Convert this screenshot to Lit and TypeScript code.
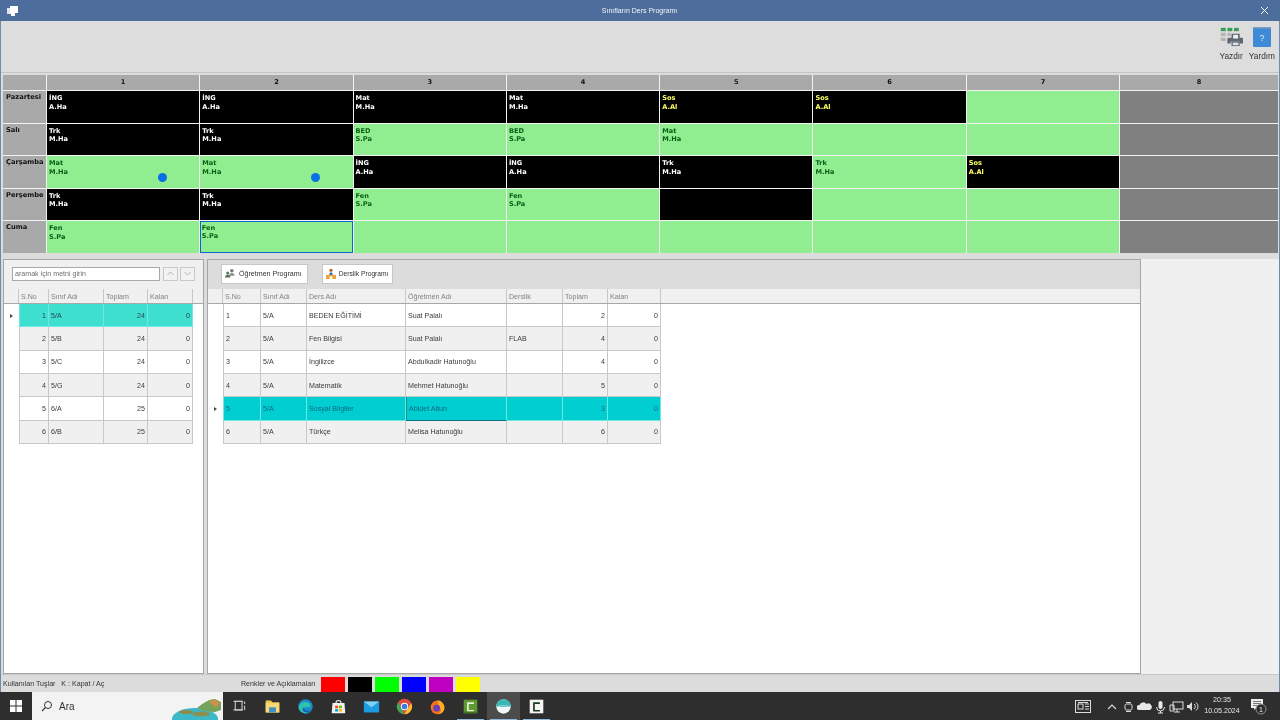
import { LitElement, html, css, svg } from "lit";
import { customElement, property } from "lit/decorators.js";
import { classMap } from "lit/directives/class-map.js";

type Col = { title: string; width: number; right?: boolean };

const LEFT_COLS: Col[] = [
  { title: "S.No", width: 30, right: true },
  { title: "Sınıf Adı", width: 55 },
  { title: "Toplam", width: 44, right: true },
  { title: "Kalan", width: 45, right: true },
];
const LEFT_ROWS = [
  ["1", "5/A", "24", "0"],
  ["2", "5/B", "24", "0"],
  ["3", "5/C", "24", "0"],
  ["4", "5/G", "24", "0"],
  ["5", "6/A", "25", "0"],
  ["6", "6/B", "25", "0"],
];
const RIGHT_COLS: Col[] = [
  { title: "S.No", width: 38 },
  { title: "Sınıf Adı", width: 46 },
  { title: "Ders Adı", width: 99 },
  { title: "Öğretmen Adı", width: 101 },
  { title: "Derslik", width: 56 },
  { title: "Toplam", width: 45, right: true },
  { title: "Kalan", width: 53, right: true },
];
const RIGHT_ROWS = [
  ["1", "5/A", "BEDEN EĞİTİMİ", "Suat Palalı", "", "2", "0"],
  ["2", "5/A", "Fen Bilgisi", "Suat Palalı", "FLAB", "4", "0"],
  ["3", "5/A", "İngilizce", "Abdulkadir Hatunoğlu", "", "4", "0"],
  ["4", "5/A", "Matematik", "Mehmet Hatunoğlu", "", "5", "0"],
  ["5", "5/A", "Sosyal Bilgiler", "Abidet Altun", "", "3", "0"],
  ["6", "5/A", "Türkçe", "Melisa Hatunoğlu", "", "6", "0"],
];

// kind: b = black, y = black with yellow text, g = green
type Slot = { kind: string; a?: string; b?: string; dot?: boolean; sel?: boolean };
const ing = { kind: "b", a: "İNG", b: "A.Ha" };
const trk = { kind: "b", a: "Trk", b: "M.Ha" };
const mat = { kind: "b", a: "Mat", b: "M.Ha" };
const sos = { kind: "y", a: "Sos", b: "A.Al" };
const gMat = { kind: "g", a: "Mat", b: "M.Ha" };
const bed = { kind: "g", a: "BED", b: "S.Pa" };
const fen = { kind: "g", a: "Fen", b: "S.Pa" };
const free = { kind: "g" };

const DAYS: { name: string; slots: Slot[] }[] = [
  { name: "Pazartesi", slots: [ing, ing, mat, mat, sos, sos, free] },
  { name: "Salı", slots: [trk, trk, bed, bed, gMat, free, free] },
  {
    name: "Çarşamba",
    slots: [{ ...gMat, dot: true }, { ...gMat, dot: true }, ing, ing, trk, { kind: "g", a: "Trk", b: "M.Ha" }, sos],
  },
  { name: "Perşembe", slots: [trk, trk, fen, fen, { kind: "b" }, free, free] },
  { name: "Cuma", slots: [fen, { ...fen, sel: true }, free, free, free, free, free] },
];

const SWATCHES = ["#ff0000", "#000000", "#00ff00", "#0000ff", "#c000c0", "#ffff00"];

@customElement("data-grid")
class DataGrid extends LitElement {
  @property({ type: Array }) cols: Col[] = [];
  @property({ type: Array }) rows: string[][] = [];
  @property({ type: Number }) indicator = 15;
  @property({ type: Number }) current = 0;
  @property({ type: Number }) focusCol = -1;
  @property() tone = "turq";

  static styles = css`
    :host {
      display: block;
      font: 7.1px "Liberation Sans", sans-serif;
      color: #3a3a3a;
    }
    .head {
      display: flex;
      height: 14px;
      background: #f0f0f0;
      border-bottom: 1px solid #a8a8a8;
      color: #808080;
    }
    .row {
      display: flex;
      height: 23.33px;
    }
    .gutter {
      flex: none;
      display: flex;
      align-items: center;
      justify-content: center;
      border-right: 1px solid #c8c8c8;
    }
    .row .gutter {
      border-right-color: transparent;
    }
    .arrow {
      width: 0;
      height: 0;
      border-left: 3px solid #444;
      border-top: 2.5px solid transparent;
      border-bottom: 2.5px solid transparent;
    }
    .cell {
      flex: none;
      box-sizing: border-box;
      display: flex;
      align-items: center;
      padding: 1px 2px 0;
      overflow: hidden;
      white-space: nowrap;
      border-right: 1px solid #c8c8c8;
      border-bottom: 1px solid #c8c8c8;
    }
    .head .cell {
      border-bottom: none;
    }
    .first {
      border-left: 1px solid #c8c8c8;
    }
    .num {
      justify-content: flex-end;
    }
    .odd .cell {
      background: #f0f0f0;
    }
    .cur .cell {
      border-color: #6fe8e0;
    }
    .cur.turq .cell {
      background: #40e0d0;
      color: #245;
    }
    .cur.dark .cell {
      background: #00ced1;
      color: #0a6a80;
    }
    .cur .cell.focus {
      border-left: 1px solid #1b8a90;
      border-bottom: 1px solid #0f7080;
    }
  `;

  render() {
    return html`
      <div class="head">
        <div class="gutter" style="width:${this.indicator - 1}px"></div>
        ${this.cols.map(
          (c) => html`<div class="cell" style="width:${c.width}px">${c.title}</div>`
        )}
      </div>
      ${this.rows.map(
        (r, i) => html`
          <div class=${classMap({ row: true, odd: i % 2 === 1, cur: i === this.current, [this.tone]: true })}>
            <div class="gutter" style="width:${this.indicator - 1}px">
              ${i === this.current ? html`<span class="arrow"></span>` : ""}
            </div>
            ${r.map(
              (v, j) => html`<div
                class=${classMap({
                  cell: true,
                  first: j === 0,
                  num: !!this.cols[j].right,
                  focus: i === this.current && j === this.focusCol,
                })}
                style="width:${this.cols[j].width}px"
              >
                ${v}
              </div>`
            )}
          </div>
        `
      )}
    `;
  }
}

const printIcon = html`<svg width="23" height="19" viewBox="0 0 28 23">
  <rect x="1" y="1" width="6" height="4" fill="#3f9a5a" />
  <rect x="9" y="1" width="6" height="4" fill="#3f9a5a" />
  <rect x="17" y="1" width="6" height="4" fill="#3f9a5a" />
  <rect x="1" y="7" width="6" height="4" fill="#b4b4b4" />
  <rect x="9" y="7" width="4" height="4" fill="#b4b4b4" />
  <rect x="1" y="13" width="6" height="4" fill="#b4b4b4" />
  <path d="M11 13h3V8h10v5h3a1 1 0 0 1 1 1v6h-4v-2H13v2H9v-6a2 2 0 0 1 2-1z" fill="#5d6872" />
  <rect x="16" y="9.5" width="6" height="4.5" fill="#eee" />
  <rect x="14" y="18" width="10" height="5" fill="#5d6872" />
  <rect x="15.5" y="19" width="7" height="3" fill="#e4e4e4" />
</svg>`;

const helpIcon = html`<svg width="18" height="20" viewBox="0 0 18 20">
  <rect width="18" height="20" rx="1" fill="#3e8ad4" />
  <rect width="18" height="1.5" fill="#7c9ec0" />
  <text x="9" y="14" font-size="9" fill="#dcecff" text-anchor="middle" font-family="Liberation Sans">?</text>
</svg>`;

const teacherIcon = html`<svg width="10" height="11" viewBox="0 0 11 11">
  <circle cx="7.5" cy="2.5" r="2" fill="#7b7b7b" />
  <path d="M4.5 8c0-2 1.5-3 3-3s3 1 3 3z" fill="#8c8c8c" />
  <circle cx="3" cy="5" r="1.7" fill="#4d7a4d" />
  <path d="M0 10c0-2 1.3-3 3-3s3 1 3 3z" fill="#55705a" />
</svg>`;

const roomIcon = html`<svg width="10" height="12" viewBox="0 0 11 12">
  <circle cx="5.5" cy="2" r="1.8" fill="#b06a30" />
  <path d="M3.5 7c0-2 1-3 2-3s2 1 2 3z" fill="#3f6fb5" />
  <rect x="0" y="7" width="11" height="4.5" fill="#f0a23c" />
  <rect x="4" y="8.5" width="3" height="3" fill="#fff" />
</svg>`;

const chevron = (up: boolean) =>
  html`<svg width="7" height="5" viewBox="0 0 7 5">
    <path d=${up ? "M.5 4l3-3 3 3" : "M.5 1l3 3 3-3"} fill="none" stroke="#b0b0b0" />
  </svg>`;

const taskIcons = [
  svg`<g fill="none" stroke="#c8c8c8" stroke-width="1.3"><rect x="5" y="4" width="8" height="10"/><path d="M3 4h11M3 14h11M16 4v3M16 9v5"/></g>`,
  svg`<path d="M2 3h6l2 2h8v12H2z" fill="#f4c64e"/><rect x="2" y="6" width="16" height="11" fill="#f8d775"/><rect x="6" y="11" width="8" height="6" fill="#3d8fc4"/>`,
  svg`<circle cx="10" cy="10" r="8.5" fill="#1b8bd0"/><path d="M2 11c1-6 8-8 12-5 3 2 2 5 0 5H8c0 3 4 5 9 3-2 4-7 5-10 3-3-1-5-3-5-6z" fill="#2fc4a8"/><path d="M8 11c0 3 4 5 9 3-2 4-7 4-9 2-2-1-2-4 0-5z" fill="#1565b8"/>`,
  svg`<path d="M3 6h14l1 12H2z" fill="#f2f2f2"/><path d="M7 6a3 3 0 0 1 6 0" fill="none" stroke="#eee" stroke-width="1.3"/><rect x="6" y="9" width="3.5" height="3" fill="#f25022"/><rect x="10.5" y="9" width="3.5" height="3" fill="#7fba00"/><rect x="6" y="13" width="3.5" height="3" fill="#00a4ef"/><rect x="10.5" y="13" width="3.5" height="3" fill="#ffb900"/>`,
  svg`<rect x="1" y="4" width="18" height="13" fill="#1e9be0"/><path d="M1 4h18l-9 7z" fill="#7fd0f5"/>`,
  svg`<circle cx="10" cy="10" r="9" fill="#dd4b3e"/><path d="M2.5 5L7 13l3 6a9 9 0 0 1-7.5-14z" fill="#3aa757"/><path d="M18 6a9 9 0 0 1-8 13l4-7z" fill="#fbc02d"/><circle cx="10" cy="10" r="4.3" fill="#fff"/><circle cx="10" cy="10" r="3.3" fill="#3b78e7"/>`,
  svg`<circle cx="10" cy="11" r="8" fill="#f5701f"/><path d="M10 3c3-1 7 3 8 7 1 5-3 9-7 9 3-2 4-5 2-8-2-2-2-5-3-8z" fill="#ffb01f"/><circle cx="9" cy="12" r="4" fill="#6a3fb5"/>`,
  svg`<rect x="2" y="2" width="16" height="16" fill="#5e9a30"/><path d="M14 6H7v9h7" fill="none" stroke="#e8f2dc" stroke-width="2"/><rect x="2" y="16" width="16" height="2" fill="#3f7020"/>`,
  svg`<circle cx="10" cy="10" r="8.5" fill="#f2f7f7"/><path d="M1.5 10h17a8.5 8.5 0 0 0-17 0z" fill="#38b7b9"/><rect x="5" y="9" width="10" height="2" fill="#fff"/><rect x="5.5" y="9.5" width="9" height="1" fill="#58b9bc"/>`,
  svg`<rect x="2" y="2" width="16" height="16" fill="#f4f4f4"/><path d="M14 6H7v9h7" fill="none" stroke="#1e3a1e" stroke-width="2"/>`,
];

const trayIcons = [
  svg`<path d="M3 10l4-4 4 4" fill="none" stroke="#ddd" stroke-width="1.1"/>`,
  svg`<rect x="4" y="5" width="7" height="6" rx="1.5" fill="none" stroke="#ddd"/><path d="M5 3.5h5M5 12.5h5" stroke="#ddd"/>`,
  svg`<path d="M2 11a2.5 2.5 0 0 1 .5-5 4 4 0 0 1 7-1 3 3 0 0 1 3.5 6z" fill="#e8e8e8"/>`,
  svg`<rect x="5.5" y="2" width="4" height="8" rx="2" fill="#e8e8e8"/><path d="M3.5 8a4 4 0 0 0 8 0M7.5 12v2M5 14h5" fill="none" stroke="#e8e8e8"/>`,
  svg`<rect x="4" y="3" width="10" height="7" fill="none" stroke="#ddd"/><path d="M1 6h4v6H1zM8 10v3M5 13h6" fill="none" stroke="#ddd"/>`,
  svg`<path d="M2 6h2l3-3v9l-3-3H2z" fill="#ddd"/><path d="M9 5a3 3 0 0 1 0 5M11 3.5a5 5 0 0 1 0 8" fill="none" stroke="#ddd"/>`,
];

@customElement("app-root")
class AppRoot extends LitElement {
  static styles = css`
    :host {
      display: flex;
      flex-direction: column;
      width: 1280px;
      height: 720px;
      overflow: hidden;
      background: #dcdcdc;
      font-family: "Liberation Sans", sans-serif;
      will-change: transform;
    }
    .title {
      flex: none;
      height: 21px;
      padding: 0 11px 0 7px;
      display: flex;
      align-items: center;
      justify-content: space-between;
      background: #4d6d9c;
      color: #f2f4f8;
      font-size: 7px;
    }
    .window {
      flex: 1;
      min-height: 0;
      display: flex;
      flex-direction: column;
      border-left: 1px solid #6f88ad;
      border-right: 1px solid #6f88ad;
    }
    .toolbar {
      flex: none;
      height: 52px;
      box-sizing: border-box;
      padding: 6px 4px 0 0;
      display: flex;
      justify-content: flex-end;
      gap: 6px;
      border-bottom: 1px solid #c4c4c4;
      background: #dddddd;
    }
    .tool {
      display: flex;
      flex-direction: column;
      align-items: center;
      justify-content: space-between;
      height: 33.5px;
      font-size: 8.3px;
      color: #333;
    }
    .timetable {
      flex: none;
      margin: 2px 1px 0 2px;
      display: grid;
      grid-template-columns: 43px repeat(7, 152.3px) 1fr;
      grid-template-rows: 15px repeat(5, 31.5px);
      gap: 1px;
      background: #f2f2f2;
      font: bold 6.6px "DejaVu Sans", sans-serif;
      line-height: 8.7px;
    }
    .hd {
      background: #a9a9a9;
      color: #111;
      display: flex;
      align-items: center;
      justify-content: center;
    }
    .day {
      background: #a9a9a9;
      color: #111;
      padding: 2px 0 0 3px;
      white-space: nowrap;
      font-size: 6.7px;
      overflow: hidden;
    }
    .slot {
      position: relative;
      box-sizing: border-box;
      padding: 3px 2px;
    }
    .slot.b {
      background: #000;
      color: #fff;
    }
    .slot.y {
      background: #000;
      color: #ffff66;
    }
    .slot.g {
      background: #90ee90;
      color: #0b5e16;
    }
    .slot.off {
      background: #808080;
    }
    .slot.sel {
      border: 1.5px solid #0a68cc;
      padding: 1.5px 0.5px;
    }
    .dot {
      position: absolute;
      left: 111px;
      top: 17px;
      width: 9px;
      height: 9px;
      border-radius: 50%;
      background: #0d6fe6;
    }
    .lower {
      flex: 1;
      min-height: 0;
      display: flex;
      margin-top: 6.5px;
      padding-left: 2px;
    }
    .panel {
      flex: none;
      box-sizing: border-box;
      display: flex;
      flex-direction: column;
      background: #fff;
      border: 1px solid #a6a6a6;
    }
    .p-left {
      width: 201px;
      margin-right: 3px;
    }
    .p-right {
      width: 934px;
    }
    .side {
      flex: 1;
      background: #f0f0f0;
    }
    .bar {
      flex: none;
      height: 29px;
      box-sizing: border-box;
      display: flex;
      align-items: center;
      padding-bottom: 2px;
      font-size: 7.1px;
    }
    .p-left .bar {
      background: #f0f0f0;
      padding-left: 8px;
    }
    .p-right .bar {
      background: #dcdcdc;
      padding-left: 13px;
      gap: 14px;
    }
    .search {
      box-sizing: border-box;
      width: 148px;
      height: 14px;
      line-height: 12px;
      padding-left: 2px;
      background: #fff;
      border: 1px solid #a8a8a8;
      color: #707070;
      margin-right: 3px;
    }
    .nav {
      box-sizing: border-box;
      width: 15px;
      height: 14px;
      margin-right: 2px;
      background: #f2f2f2;
      border: 1px solid #c8c8c8;
      display: flex;
      align-items: center;
      justify-content: center;
    }
    .btn {
      box-sizing: border-box;
      height: 20px;
      display: flex;
      align-items: center;
      gap: 4px;
      padding: 0 5px 0 3px;
      background: #fff;
      border: 1px solid #c6c6c6;
      color: #333;
    }
    .btn.room {
      gap: 3px;
      padding-right: 4px;
      font-size: 6.7px;
    }
    .status {
      flex: none;
      height: 17px;
      display: flex;
      align-items: flex-end;
      padding-left: 2px;
      font-size: 7.1px;
      color: #333;
      border-top: 1px solid #c8c8c8;
    }
    .status .keys {
      width: 238px;
      height: 16px;
      line-height: 17px;
      white-space: pre;
    }
    .status .legend {
      width: 80px;
      height: 16px;
      line-height: 17px;
    }
    .swatches {
      display: flex;
      gap: 3px;
    }
    .swatch {
      width: 24px;
      height: 15px;
    }
    .taskbar {
      flex: none;
      height: 28px;
      display: flex;
      align-items: stretch;
      background: #2e2e2e;
      color: #eee;
    }
    .start {
      width: 32px;
      display: flex;
      align-items: center;
      justify-content: center;
    }
    .find {
      width: 191px;
      display: flex;
      align-items: center;
      gap: 6px;
      padding-left: 9px;
      box-sizing: border-box;
      background: #f3f3f3;
      color: #333;
      font-size: 10px;
      position: relative;
      overflow: hidden;
    }
    .island {
      position: absolute;
      right: 1px;
      bottom: 0;
    }
    .apps {
      display: flex;
    }
    .app {
      width: 33px;
      display: flex;
      align-items: center;
      justify-content: center;
      position: relative;
    }
    .app.open::after {
      content: "";
      position: absolute;
      left: 3px;
      right: 3px;
      bottom: 0;
      height: 1.5px;
      background: #8fb8de;
    }
    .app.active {
      background: #4c4c4c;
    }
    .tray {
      margin-left: auto;
      display: flex;
      align-items: center;
      padding-right: 8px;
    }
    .news {
      width: 30px;
      margin-right: 6px;
      display: flex;
      justify-content: center;
    }
    .tray-icon {
      width: 16px;
      display: flex;
      justify-content: center;
    }
    .clock {
      width: 44px;
      text-align: center;
      font-size: 7.1px;
      line-height: 11px;
      color: #e6e6e6;
    }
    .notify {
      width: 28px;
      display: flex;
      justify-content: center;
    }
  `;

  private appIcon(body: unknown, i: number) {
    const cls = { app: true, open: i >= 7, active: i === 8 };
    return html`<div class=${classMap(cls)}>
      <svg width="17" height="17" viewBox="0 0 20 20">${body}</svg>
    </div>`;
  }

  render() {
    return html`
      <div class="title">
        <svg width="12" height="12" viewBox="0 0 12 12">
          <rect x="0" y="3" width="4" height="6" fill="#dfe6f0" />
          <rect x="3" y="1" width="8" height="7" fill="#fff" />
          <rect x="4" y="8" width="4" height="3" fill="#fff" />
        </svg>
        <span>Sınıfların Ders Programı</span>
        <svg width="9" height="9" viewBox="0 0 9 9">
          <path d="M1 1l7 7M8 1L1 8" stroke="#fff" stroke-width="1" />
        </svg>
      </div>
      <div class="window">
        <div class="toolbar">
          <div class="tool">${printIcon}<span>Yazdır</span></div>
          <div class="tool">${helpIcon}<span>Yardım</span></div>
        </div>
        <div class="timetable">
          <div class="hd"></div>
          ${[1, 2, 3, 4, 5, 6, 7, 8].map((n) => html`<div class="hd">${n}</div>`)}
          ${DAYS.map(
            (d) => html`
              <div class="day">${d.name}</div>
              ${d.slots.map(
                (s) => html`<div class=${classMap({ slot: true, [s.kind]: true, sel: !!s.sel })}>
                  ${s.a ? html`<div>${s.a}</div><div>${s.b}</div>` : ""}
                  ${s.dot ? html`<span class="dot"></span>` : ""}
                </div>`
              )}
              <div class="slot off"></div>
            `
          )}
        </div>
        <div class="lower">
          <div class="panel p-left">
            <div class="bar">
              <div class="search">aramak için metni girin</div>
              <div class="nav">${chevron(true)}</div>
              <div class="nav">${chevron(false)}</div>
            </div>
            <data-grid .cols=${LEFT_COLS} .rows=${LEFT_ROWS} .indicator=${15} .current=${0} tone="turq"></data-grid>
          </div>
          <div class="panel p-right">
            <div class="bar">
              <div class="btn">${teacherIcon}<span>Öğretmen Programı</span></div>
              <div class="btn room">${roomIcon}<span>Derslik Programı</span></div>
            </div>
            <data-grid
              .cols=${RIGHT_COLS}
              .rows=${RIGHT_ROWS}
              .indicator=${15}
              .current=${4}
              .focusCol=${3}
              tone="dark"
            ></data-grid>
          </div>
          <div class="side"></div>
        </div>
        <div class="status">
          <div class="keys">Kullanılan Tuşlar   K : Kapat / Aç</div>
          <div class="legend">Renkler ve Açıklamaları</div>
          <div class="swatches">
            ${SWATCHES.map((c) => html`<div class="swatch" style="background:${c}"></div>`)}
          </div>
        </div>
      </div>
      <div class="taskbar">
        <div class="start">
          <svg width="12" height="12" viewBox="0 0 12 12" fill="#fff">
            <rect width="5.5" height="5.5" />
            <rect x="6.5" width="5.5" height="5.5" />
            <rect y="6.5" width="5.5" height="5.5" />
            <rect x="6.5" y="6.5" width="5.5" height="5.5" />
          </svg>
        </div>
        <div class="find">
          <svg width="12" height="12" viewBox="0 0 12 12">
            <circle cx="7" cy="5" r="3.5" fill="none" stroke="#333" />
            <path d="M4.5 7.5L1 11" stroke="#333" stroke-width="1.1" />
          </svg>
          <span>Ara</span>
          <svg class="island" width="50" height="21" viewBox="0 0 50 21">
            <ellipse cx="23" cy="20" rx="23" ry="11" fill="#3cb8c8" />
            <ellipse cx="14" cy="13" rx="7" ry="2" fill="#8d8a4a" />
            <ellipse cx="29" cy="15" rx="9" ry="2.5" fill="#8a9050" />
            <path d="M25 9c6-5 12-9 18-9l6 3v8l-6 2c-6 0-12-1-18-4z" fill="#74a45c" />
            <path d="M37 3l6-3 5 4-4 5z" fill="#c9924a" />
          </svg>
        </div>
        <div class="apps">${taskIcons.map((b, i) => this.appIcon(b, i))}</div>
        <div class="tray">
          <div class="news">
            <svg width="16" height="13" viewBox="0 0 16 13">
              <rect x=".5" y=".5" width="15" height="12" fill="none" stroke="#ddd" />
              <rect x="3" y="4" width="5" height="5" fill="none" stroke="#ddd" />
              <path d="M10 4h4M10 6.5h4M10 9h4M3 2.5h10" stroke="#ddd" />
            </svg>
          </div>
          ${trayIcons.map(
            (b) => html`<div class="tray-icon">
              <svg width="15" height="15" viewBox="0 0 15 15">${b}</svg>
            </div>`
          )}
          <div class="clock">20:35<br />10.05.2024</div>
          <div class="notify">
            <svg width="18" height="18" viewBox="0 0 18 18">
              <path d="M2 2h12v9H7l-2 2v-2H2z" fill="#eee" />
              <path d="M4 4.5h8M4 6.5h8M4 8.5h8" stroke="#444" stroke-width=".7" />
              <circle cx="12" cy="12" r="5" fill="#2b2b2b" stroke="#bbb" stroke-width=".7" />
              <text x="12" y="14.5" font-size="7" fill="#eee" text-anchor="middle" font-family="Liberation Sans">1</text>
            </svg>
          </div>
        </div>
      </div>
    `;
  }
}
